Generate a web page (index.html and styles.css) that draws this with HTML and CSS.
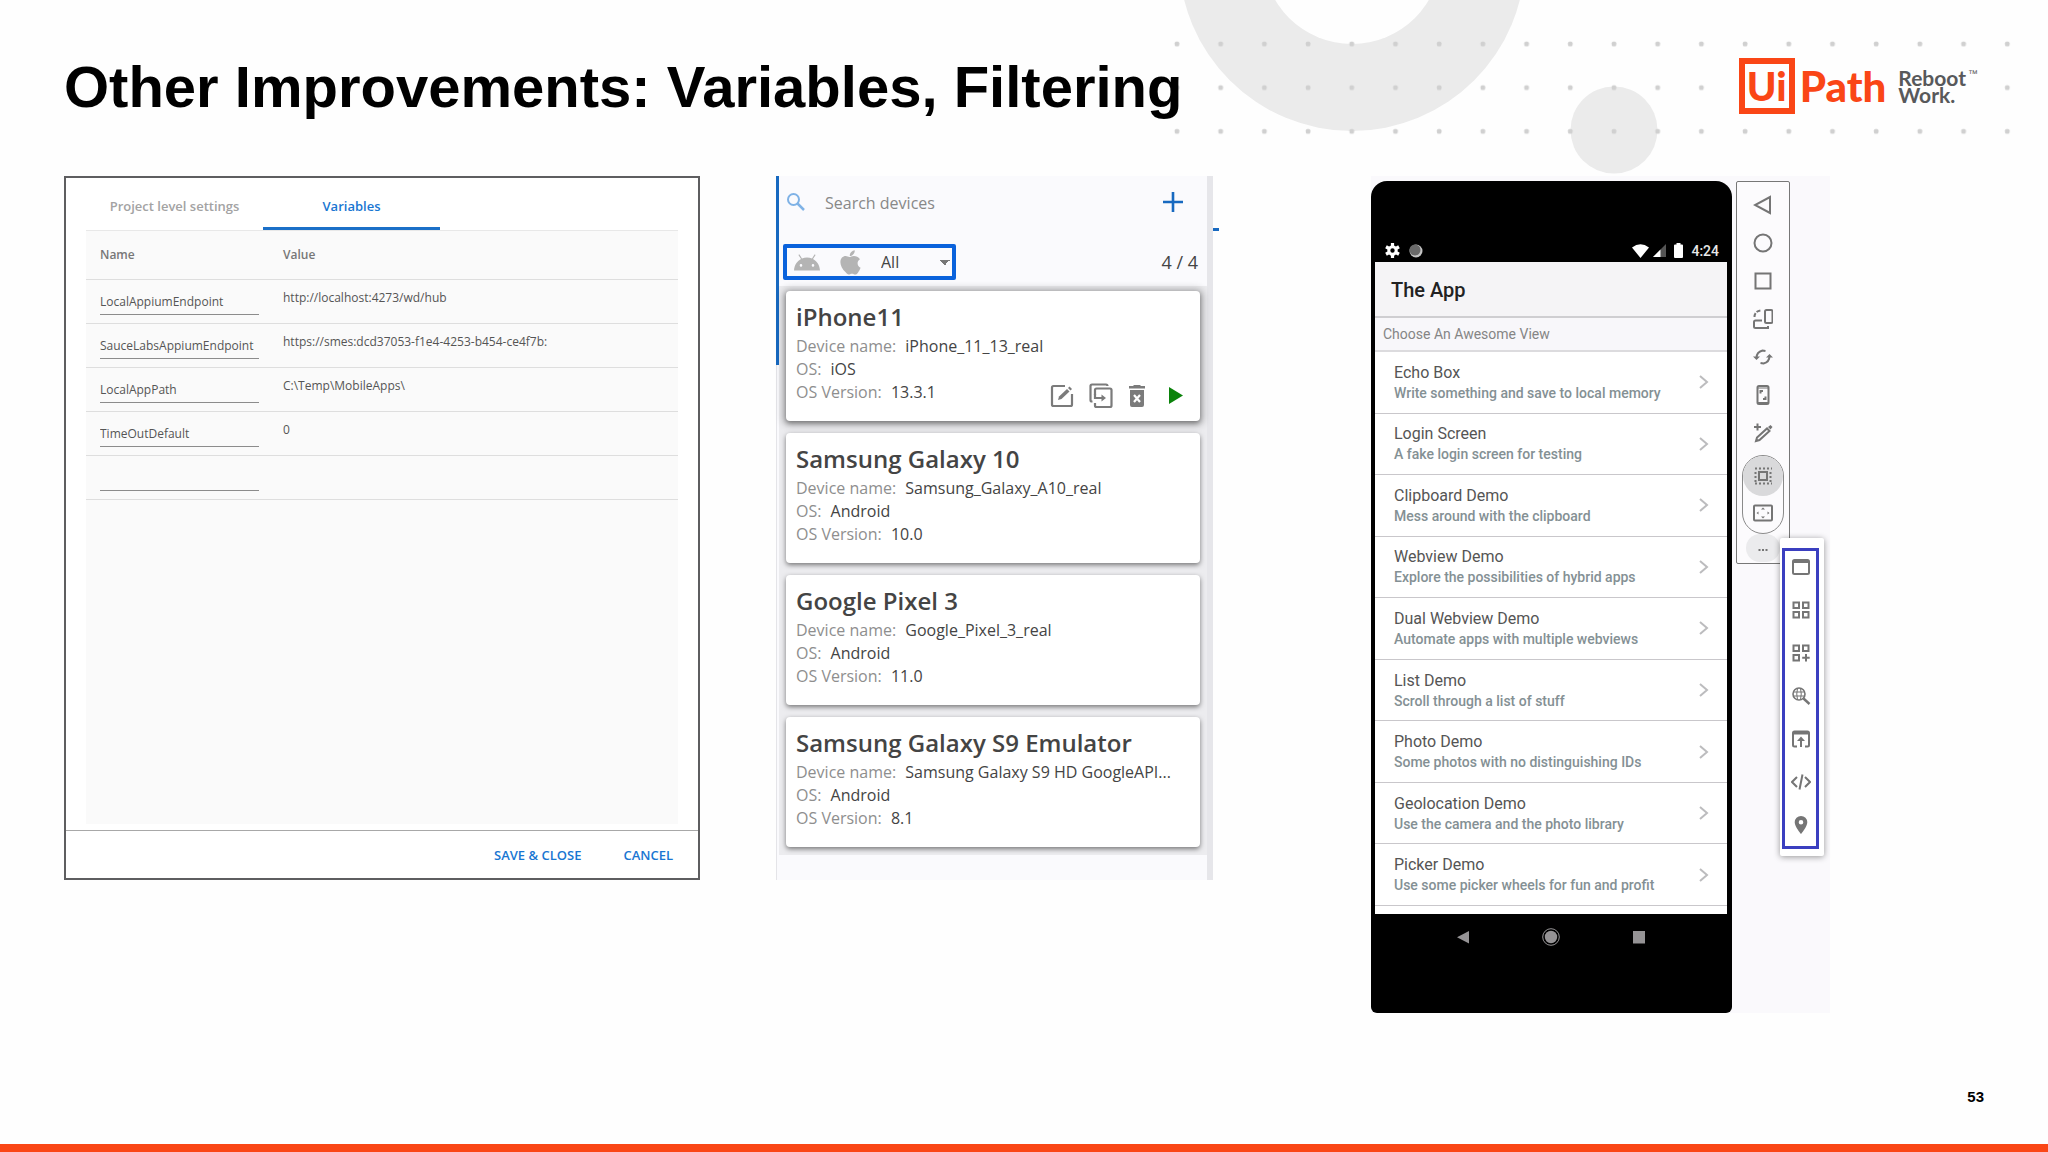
FILE: index.html
```
<!DOCTYPE html>
<html lang="en">
<head>
    <meta charset="UTF-8">
    <meta name="viewport" content="width=device-width, initial-scale=1.0">
    <title>Other Improvements: Variables, Filtering</title>
    <link rel="stylesheet" href="styles.css">
</head>
<body>
    <!-- Background ring and dots -->
    <svg class="backdrop" width="900" height="180" viewBox="1148 0 900 180" aria-hidden="true">
        <defs>
            <pattern id="dots" x="1155" y="22" width="43.7" height="43.7" patternUnits="userSpaceOnUse">
                <rect x="19.700" y="19.700" width="4.600" height="4.600" rx="1.500" fill="#d0d0d0"/>
            </pattern>
        </defs>
        <circle cx="1352" cy="-42" r="173" fill="#ebebeb"/>
        <circle cx="1352" cy="-45" r="89" fill="#fefefe"/>
        <circle cx="1614" cy="130" r="43.5" fill="#ebebeb"/>
        <rect x="1160" y="30" width="860" height="110" fill="url(#dots)"/>
        <rect x="1725" y="56" width="266" height="62" fill="#fefefe"/>
    </svg>

    <header class="slide-header">
        <h1>Other Improvements: Variables, Filtering</h1>
        <div class="logo">
            <span class="logo-ui">Ui</span>
            <span class="logo-path">Path</span>
            <div class="logo-tag">
                <div class="tag-line">Reboot<span class="tm">™</span></div>
                <div class="tag-line">Work.</div>
            </div>
        </div>
    </header>

    <main class="slide-body">
        <!-- Settings dialog -->
        <section class="dialog">
            <div class="tabs" role="tablist">
                <button class="tab" role="tab">Project level settings</button>
                <button class="tab active" role="tab" aria-selected="true">Variables</button>
            </div>
            <div class="dialog-content">
                <table class="variables">
                    <thead>
                        <tr><th class="col-name">Name</th><th>Value</th></tr>
                    </thead>
                    <tbody>
                        <tr>
                            <td><input class="var-name" aria-label="Name 1" value="LocalAppiumEndpoint"></td>
                            <td><input class="var-value" aria-label="Value 1" value="http://localhost:4273/wd/hub"></td>
                        </tr>
                        <tr>
                            <td><input class="var-name" aria-label="Name 2" value="SauceLabsAppiumEndpoint"></td>
                            <td><input class="var-value" aria-label="Value 2" value="https://smes:dcd37053-f1e4-4253-b454-ce4f7b:"></td>
                        </tr>
                        <tr>
                            <td><input class="var-name" aria-label="Name 3" value="LocalAppPath"></td>
                            <td><input class="var-value" aria-label="Value 3" value="C:\Temp\MobileApps\"></td>
                        </tr>
                        <tr>
                            <td><input class="var-name" aria-label="Name 4" value="TimeOutDefault"></td>
                            <td><input class="var-value" aria-label="Value 4" value="0"></td>
                        </tr>
                        <tr>
                            <td><input class="var-name" aria-label="Name 5"></td>
                            <td><input class="var-value" aria-label="Value 5"></td>
                        </tr>
                    </tbody>
                </table>
            </div>
            <footer class="dialog-footer">
                <button>SAVE &amp; CLOSE</button>
                <button>CANCEL</button>
            </footer>
        </section>

        <!-- Device list -->
        <section class="devices">
            <div class="search-row">
                <svg width="20" height="20" viewBox="0 0 20 20" fill="none" stroke="#7fb2e6" stroke-width="2"><circle cx="7.500" cy="7.500" r="5.500"/><path d="M11.500 11.500L18 18" stroke-width="2.500"/></svg>
                <input class="search" type="text" aria-label="Search devices" placeholder="Search devices">
                <button class="icon-button" aria-label="Add device">
                    <svg width="22" height="22" viewBox="0 0 22 22" stroke="#1769c0" stroke-width="2.600"><path d="M11 1v20M1 11h20"/></svg>
                </button>
            </div>
            <div class="filter-row">
                <div class="filter">
                    <svg width="26" height="17" viewBox="0 0 26 17" fill="#b4b4b4"><path d="M0 16.500C.3 11 3 7 7 4.900L4.400.9l.9-.6 2.700 4.200c3.100-1.300 6.900-1.300 10 0L20.700.3l.9.6L19 4.900c4 2.100 6.700 6.100 7 11.600zM7 12.700a1.300 1.300 0 1 0 0-2.600 1.300 1.300 0 0 0 0 2.600zm12 0a1.300 1.300 0 1 0 0-2.600 1.300 1.300 0 0 0 0 2.600z"/></svg>
                    <svg width="21" height="25" viewBox="0 0 21 25" fill="#b4b4b4"><path d="M14.700.2c.2 1.600-.4 3-1.300 4.100-.9 1.100-2.200 1.900-3.600 1.800-.2-1.500.5-3 1.400-4 .9-1 2.400-1.800 3.500-1.900zM20 9.200c-1.500.9-2.400 2.300-2.400 4.100 0 2 1.200 3.700 3 4.400-.6 1.800-1.500 3.500-2.700 5-.7.900-1.400 1.800-2.600 1.800s-1.700-.8-3.300-.8-2.200.8-3.300.8c-1.200 0-2-.9-2.800-1.900C2.100 19.500.4 15 .4 12.300c0-4 2.600-6.200 5.200-6.200 1.500 0 2.900 1 3.800 1 .9 0 2.500-1.100 4.500-1.100 2.100 0 4.600 1 6.100 3.200z"/></svg>
                    <select class="filter-select" aria-label="Platform">
                        <option>All</option>
                    </select>
                </div>
                <span class="count">4 / 4</span>
            </div>
            <div class="device-list">
                <article class="device-card selected">
                    <h2>iPhone11</h2>
                    <p>Device name: <b>iPhone_11_13_real</b></p>
                    <p>OS: <b>iOS</b></p>
                    <p>OS Version: <b>13.3.1</b></p>
                    <div class="card-actions">
                        <button class="icon-button" aria-label="Edit">
                            <svg width="24" height="24" viewBox="0 0 24 24" fill="none" stroke="#7b7b7b" stroke-width="2.200"><path d="M15 2H3.500Q2 2 2 3.500v17Q2 22 3.500 22h17q1.500 0 1.500-1.500V10"/><path d="M8 16l1-3.500L17 5l2.500 2.500L11.500 15z" fill="#7b7b7b" stroke="none"/><path d="M18 4l1.500-1.500L22 5l-1.500 1.500z" fill="#7b7b7b" stroke="none"/></svg>
                        </button>
                        <button class="icon-button" aria-label="Duplicate">
                            <svg width="24" height="26" viewBox="0 0 24 26" fill="none" stroke="#7b7b7b" stroke-width="2.200"><path d="M3.500 18.500H3q-1.500 0-1.500-1.500V3Q1.500 1.500 3 1.500h14q1.500 0 1.500 1.500"/><path d="M6 12V7q0-1.500 1.500-1.500H21q1.500 0 1.500 1.500v15.500q0 1.500-1.500 1.500H7.500Q6 24 6 22.500V20"/><path d="M6 11v4h8"/><path d="M12.500 11.500L17 15l-4.500 3.500z" fill="#7b7b7b" stroke="none"/></svg>
                        </button>
                        <button class="icon-button" aria-label="Delete">
                            <svg width="18" height="24" viewBox="0 0 18 24"><path d="M6 1h6l1 1h4v2.500H1V2h4zM2 6h14v15q0 2-2 2H4q-2 0-2-2z" fill="#7b7b7b"/><path d="M6 11l6 7M12 11l-6 7" stroke="#fff" stroke-width="2.200"/></svg>
                        </button>
                        <button class="icon-button" aria-label="Run">
                            <svg width="14" height="18" viewBox="0 0 14 18"><path d="M0 0v17l14-8.500z" fill="#0b830b"/></svg>
                        </button>
                    </div>
                </article>
                <article class="device-card">
                    <h2>Samsung Galaxy 10</h2>
                    <p>Device name: <b>Samsung_Galaxy_A10_real</b></p>
                    <p>OS: <b>Android</b></p>
                    <p>OS Version: <b>10.0</b></p>
                </article>
                <article class="device-card">
                    <h2>Google Pixel 3</h2>
                    <p>Device name: <b>Google_Pixel_3_real</b></p>
                    <p>OS: <b>Android</b></p>
                    <p>OS Version: <b>11.0</b></p>
                </article>
                <article class="device-card">
                    <h2>Samsung Galaxy S9 Emulator</h2>
                    <p>Device name: <b>Samsung Galaxy S9 HD GoogleAPI...</b></p>
                    <p>OS: <b>Android</b></p>
                    <p>OS Version: <b>8.1</b></p>
                </article>
            </div>
        </section>

        <!-- Emulator -->
        <section class="emulator">
            <div class="phone">
                <div class="status-bar">
                    <svg width="15" height="15" viewBox="0 0 15 15"><circle cx="7.500" cy="7.500" r="3.700" fill="none" stroke="#fff" stroke-width="3"/><path d="M7.500 0v3M7.500 12v3M1 3.750l2.600 1.500M11.400 9.750l2.600 1.500M1 11.250l2.600-1.500M11.400 5.250l2.600-1.500" stroke="#fff" stroke-width="3.200"/></svg>
                    <svg width="14" height="14" viewBox="0 0 14 14"><circle cx="7" cy="7" r="6.500" fill="#c4c4c4"/><circle cx="6" cy="6" r="5.500" fill="#6a6a6a"/></svg>
                    <span class="spacer"></span>
                    <svg width="17" height="14" viewBox="0 0 17 14"><path d="M0 3.500Q8.500-3 17 3.500L8.500 14z" fill="#fff"/></svg>
                    <svg width="13" height="13" viewBox="0 0 13 13"><path d="M13 0v13H0z" fill="#555"/><path d="M7.500 5.500V13H0z" fill="#fff"/></svg>
                    <svg class="battery" width="9" height="15" viewBox="0 0 9 15"><path d="M2.500 0h4v1.500H8q1 0 1 1V14q0 1-1 1H1q-1 0-1-1V2.500q0-1 1-1h1.500z" fill="#fff"/></svg>
                    <span>4:24</span>
                </div>
                <div class="screen">
                    <div class="app-bar">The App</div>
                    <div class="list-header">Choose An Awesome View</div>
                    <ul class="views">
                        <li><a href="#"><span class="view-text">Echo Box<small>Write something and save to local memory</small></span><svg class="chevron" viewBox="0 0 10 14"><path d="M1 1l7 6-7 6"/></svg></a></li>
                        <li><a href="#"><span class="view-text">Login Screen<small>A fake login screen for testing</small></span><svg class="chevron" viewBox="0 0 10 14"><path d="M1 1l7 6-7 6"/></svg></a></li>
                        <li><a href="#"><span class="view-text">Clipboard Demo<small>Mess around with the clipboard</small></span><svg class="chevron" viewBox="0 0 10 14"><path d="M1 1l7 6-7 6"/></svg></a></li>
                        <li><a href="#"><span class="view-text">Webview Demo<small>Explore the possibilities of hybrid apps</small></span><svg class="chevron" viewBox="0 0 10 14"><path d="M1 1l7 6-7 6"/></svg></a></li>
                        <li><a href="#"><span class="view-text">Dual Webview Demo<small>Automate apps with multiple webviews</small></span><svg class="chevron" viewBox="0 0 10 14"><path d="M1 1l7 6-7 6"/></svg></a></li>
                        <li><a href="#"><span class="view-text">List Demo<small>Scroll through a list of stuff</small></span><svg class="chevron" viewBox="0 0 10 14"><path d="M1 1l7 6-7 6"/></svg></a></li>
                        <li><a href="#"><span class="view-text">Photo Demo<small>Some photos with no distinguishing IDs</small></span><svg class="chevron" viewBox="0 0 10 14"><path d="M1 1l7 6-7 6"/></svg></a></li>
                        <li><a href="#"><span class="view-text">Geolocation Demo<small>Use the camera and the photo library</small></span><svg class="chevron" viewBox="0 0 10 14"><path d="M1 1l7 6-7 6"/></svg></a></li>
                        <li><a href="#"><span class="view-text">Picker Demo<small>Use some picker wheels for fun and profit</small></span><svg class="chevron" viewBox="0 0 10 14"><path d="M1 1l7 6-7 6"/></svg></a></li>
                    </ul>
                </div>
                <div class="phone-nav">
                    <button class="icon-button" aria-label="Back"><svg width="18" height="18" viewBox="0 0 18 18"><path d="M15 3v12.500L3 9.250z" fill="#959395"/></svg></button>
                    <button class="icon-button" aria-label="Home"><svg width="18" height="18" viewBox="0 0 18 18"><circle cx="9" cy="9" r="8.300" fill="none" stroke="#959395"/><circle cx="9" cy="9" r="6.200" fill="#959395"/></svg></button>
                    <button class="icon-button" aria-label="Overview"><svg width="18" height="18" viewBox="0 0 18 18"><path d="M3 3h12v12.500H3z" fill="#959395"/></svg></button>
                </div>
            </div>

            <div class="toolbar">
                <button class="tool" aria-label="Back"><svg viewBox="0 0 20 20"><path d="M17 2v16L2 10z"/></svg></button>
                <button class="tool" aria-label="Home"><svg viewBox="0 0 20 20"><circle cx="10" cy="10" r="8.500"/></svg></button>
                <button class="tool" aria-label="Overview"><svg viewBox="0 0 20 20"><path d="M2.500 2.500h15v15h-15z"/></svg></button>
                <button class="tool" aria-label="Rotate"><svg viewBox="0 0 20 20"><rect x="12" y="1" width="7.500" height="13" rx="1.500"/><path d="M9 11.500H2.500Q1 11.500 1 13v4.500Q1 19 2.500 19h12.500v-2"/><path d="M1.500 8q0-5.500 6-6.500" stroke-dasharray="4 1.500"/></svg></button>
                <button class="tool" aria-label="Refresh"><svg viewBox="0 0 20 20"><path d="M3.500 11q0-6 6-7.500l3 .5M16.500 9q0 6-6 7.500l-3-.5"/><path d="M0 9.500h7L3.500 13zM13 10.500h7L16.500 7z" class="solid"/></svg></button>
                <button class="tool" aria-label="Fit screen"><svg viewBox="0 0 20 20"><rect x="4.500" y="1" width="11" height="18" rx="1.500"/><path d="M5 3h10M5 17.500h10" stroke-width="1"/><path d="M7.500 8.500V6H10M12.500 11.500V14H10"/></svg></button>
                <button class="tool" aria-label="Edit"><svg viewBox="0 0 20 20"><path d="M4.500.5v7M1 4h7"/><path d="M3 18l1-3.500L14 5.500l2.500 2.500L6.500 17z"/><path d="M15 4l2.500-2 2 2-2 2.500z" class="solid"/></svg></button>
                <div class="tool-group">
                    <button class="tool round on" aria-label="Select"><svg viewBox="0 0 20 20"><rect x="6" y="6" width="8" height="8"/><path d="M2 2.500h17M2 17.500h17M2.500 6v11M17.500 6v11" stroke-dasharray="2 2"/></svg></button>
                    <button class="tool" aria-label="Resize"><svg viewBox="0 0 20 20"><rect x="1" y="2.500" width="18" height="15" rx="1"/><path d="M10 4.500l2 2H8zM10 15.500l2-2H8zM3.500 10l2-1.500v3zM16.500 10l-2-1.500v3z" class="solid"/></svg></button>
                </div>
                <button class="tool round more" aria-label="More"><svg viewBox="0 0 20 20"><path d="M5.500 9h2v2h-2zM9 9h2v2H9zM12.500 9h2v2h-2z" class="solid"/></svg></button>
            </div>

            <div class="side-menu">
                <div class="side-tools">
                    <button class="tool" aria-label="Window"><svg viewBox="0 0 20 20"><rect x="2" y="3" width="16" height="14" rx="1.500"/><path d="M2 4.500h16" stroke-width="3"/></svg></button>
                    <button class="tool" aria-label="Apps"><svg viewBox="0 0 20 20"><path d="M2.500 2.500H8V8H2.500zM12 2.500h5.500V8H12zM2.500 12H8v5.500H2.500zM12 12h5.500v5.500H12z"/></svg></button>
                    <button class="tool" aria-label="Add app"><svg viewBox="0 0 20 20"><path d="M2.500 2.500H8V8H2.500zM12 2.500h5.500V8H12zM2.500 12H8v5.500H2.500zM15 11v7.500M11.200 14.700h7.500"/></svg></button>
                    <button class="tool" aria-label="Inspect web"><svg viewBox="0 0 20 20"><circle cx="8" cy="8" r="6" stroke-width="1.600"/><path d="M2 6h12M2 10h12M6.500 2.500q-1.500 5.500 0 11M9.500 2.500q1.500 5.500 0 11" stroke-width="1"/><path d="M12.500 12.500l6 5.500" stroke-width="2.400"/></svg></button>
                    <button class="tool" aria-label="Open in browser"><svg viewBox="0 0 20 20"><path d="M6 17.500H3.500Q2 17.500 2 16V4q0-1.500 1.500-1.500h13Q18 2.500 18 4v12q0 1.500-1.500 1.500H14"/><path d="M2 4h16" stroke-width="3"/><path d="M10 18V11"/><path d="M6 12l4-4.500 4 4.500z" class="solid"/></svg></button>
                    <button class="tool" aria-label="Source"><svg viewBox="0 0 20 20"><path d="M6 5l-5 5 5 5M14 5l5 5-5 5M11.500 2.500l-3 15"/></svg></button>
                    <button class="tool" aria-label="Location"><svg viewBox="0 0 20 20"><path d="M10 1a6.300 6.300 0 0 0-6.300 6.300C3.700 12 10 19 10 19s6.300-7 6.300-11.700A6.300 6.300 0 0 0 10 1zm0 4a2.300 2.300 0 1 1 0 4.600A2.300 2.300 0 0 1 10 5z" class="solid"/></svg></button>
                </div>
            </div>
        </section>
    </main>

    <footer class="slide-footer">53</footer>
</body>
</html>
```
FILE: styles.css
```
* {
    box-sizing: border-box;
}

body {
    display: flex;
    flex-direction: column;
    min-height: 100vh;
    margin: 0;
    background-color: #fefefe;
    color: #000;
    font-family: "Open Sans", "Noto Sans", sans-serif;
    border-bottom: 8px solid #fa4616;
    position: relative;
}

button, input, select {
    font: inherit;
    color: inherit;
    border: none;
    background: none;
    padding: 0;
    margin: 0;
    outline: none;
}

svg {
    display: block;
    flex: none;
}

.backdrop {
    position: absolute;
    top: 0;
    right: 0;
}

/* Header */
.slide-header {
    position: relative;
    display: flex;
    justify-content: space-between;
    align-items: center;
    height: 176px;
    padding: 0 70px 4px 64px;
}

h1 {
    margin: 0;
    font-family: "Liberation Sans", Arial, sans-serif;
    font-size: 58px;
    line-height: 68px;
    padding-top: 2px;
}

.logo {
    display: flex;
    align-items: center;
    height: 56px;
    margin-bottom: 1px;
    color: #fa4616;
    font-family: Lato, sans-serif;
    font-weight: bold;
}

.logo-ui {
    display: flex;
    align-items: center;
    justify-content: center;
    width: 56px;
    height: 56px;
    border: 6px solid #fa4616;
    font-size: 40px;
    font-weight: 900;
    line-height: 40px;
}

.logo-path {
    margin-left: 5px;
    font-size: 42px;
    font-weight: 900;
    line-height: 42px;
}

.logo-tag {
    margin-left: 12px;
    color: #58595b;
    font-size: 21px;
}

.tag-line {
    display: flex;
    height: 17px;
    line-height: 17px;
}

.tm {
    margin-left: 2px;
    font-family: "Liberation Sans", Arial, sans-serif;
    font-size: 10px;
    font-weight: normal;
    line-height: 10px;
}

.slide-body {
    flex: 1;
    display: grid;
    grid-template-columns: 636fr 76fr 443fr 152fr 459fr 154fr;
    align-items: start;
    padding: 0 64px;
}

/* Settings dialog */
.dialog {
    display: flex;
    flex-direction: column;
    min-height: 704px;
    border: 2px solid #5e5e60;
    background-color: #fff;
    color: #555;
    font-size: 13px;
}

.tabs {
    display: flex;
    margin: 0 20px;
    border-bottom: 1px solid #e8e8e8;
}

.tab {
    width: 177px;
    height: 52px;
    padding-top: 6px;
    color: #a3a3a3;
    font-weight: 600;
    border-bottom: 3px solid transparent;
}

.tab.active {
    color: #1976d2;
    border-bottom-color: #1b70c8;
}

.dialog-content {
    flex: 1;
    margin: 0 20px 6px;
    background-color: #fafafa;
}

.variables {
    width: 100%;
    border-collapse: collapse;
}

.variables th {
    height: 48px;
    padding: 0 0 0 14px;
    font-size: 12px;
    font-weight: 600;
    color: #777;
    text-align: left;
}

.variables td {
    height: 44px;
    padding: 0 0 0 14px;
    vertical-align: top;
}

.variables tr {
    border-bottom: 1px solid #dedede;
}

.variables .col-name {
    width: 183px;
}

.var-name {
    display: block;
    width: 159px;
    height: 26px;
    margin-top: 9px;
    border-bottom: 1px solid #8c8c8c;
    font-size: 12px;
}

.var-value {
    display: block;
    width: 270px;
    height: 24px;
    margin-top: 6px;
    font-size: 12px;
}

.dialog-footer {
    display: flex;
    justify-content: flex-end;
    gap: 42px;
    height: 48px;
    padding-right: 25px;
    border-top: 1px solid #a8a8a8;
    color: #1976d2;
    font-weight: 600;
}

/* Device list */
.devices {
    grid-column: 3;
    position: relative;
    min-height: 704px;
    margin-right: 6px;
    padding-left: 2px;
    background-color: #fafafd;
    border-left: 1px solid #e4e4e8;
    border-right: 6px solid #e6e6ea;
    color: #444;
    font-size: 16px;
}

/* selection marks on both edges */
.devices::before {
    content: "";
    position: absolute;
    left: -1px;
    top: 0;
    width: 3px;
    height: 189px;
    background-color: #1769c0;
}

.devices::after {
    content: "";
    position: absolute;
    right: -12px;
    top: 52px;
    width: 6px;
    height: 3px;
    background-color: #1769c0;
}

.search-row {
    display: flex;
    align-items: center;
    height: 54px;
    padding: 0 23px 2px 7px;
}

.search {
    flex: 1;
    min-width: 0;
    margin: 2px 0 0 19px;
}

.search::placeholder {
    color: #888;
    opacity: 1;
}

.icon-button {
    cursor: pointer;
}

.filter-row {
    display: flex;
    align-items: center;
    justify-content: space-between;
    height: 56px;
    padding: 8px 9px 0 4px;
}

.filter {
    display: flex;
    align-items: center;
    width: 173px;
    height: 36px;
    padding-left: 7px;
    gap: 20px;
    border: 4px solid #0a62dc;
    border-radius: 2px;
}

.filter-select {
    flex: 1;
    appearance: none;
    background: linear-gradient(to bottom left, #777 50%, transparent 50%) right 7px center / 5px 5px no-repeat,
        linear-gradient(to bottom right, #777 50%, transparent 50%) right 2px center / 5px 5px no-repeat;
}

.count {
    font-size: 18px;
}

.device-list {
    display: flex;
    flex-direction: column;
    gap: 12px;
    padding: 5px 7px 8px;
    background-color: #ececef;
}

.device-card {
    position: relative;
    height: 130px;
    padding: 10px;
    background-color: #fff;
    border-radius: 4px;
    box-shadow: 0 2px 5px rgba(0, 0, 0, 0.5);
}

.device-card.selected {
    box-shadow: 0 1px 7px 4px rgba(0, 0, 0, 0.2), 0 2px 5px rgba(0, 0, 0, 0.4);
}

.device-card h2 {
    margin: 0 0 2px;
    font-size: 24px;
    font-weight: 600;
    line-height: 32px;
}

.device-card p {
    margin: 0;
    overflow: hidden;
    white-space: nowrap;
    color: #8e8e8e;
    line-height: 23px;
}

.device-card b {
    margin-left: 5px;
    color: #444;
    font-weight: normal;
}

.card-actions {
    position: absolute;
    right: 17px;
    bottom: 12px;
    display: flex;
    align-items: center;
    gap: 15px;
}

.card-actions .icon-button:last-child {
    margin-left: 8px;
}

/* Emulator */
.emulator {
    grid-column: 5;
    position: relative;
    display: flex;
    align-items: flex-start;
    gap: 4px;
    padding-top: 5px;
    background-color: #faf9fc;
    font-family: Roboto, sans-serif;
}

.phone {
    width: 361px;
    padding: 56px 5px 0 4px;
    background-color: #000;
    border-radius: 16px 16px 6px 6px;
}

.status-bar {
    display: flex;
    align-items: center;
    gap: 4px;
    height: 25px;
    padding: 2px 8px 0 10px;
    color: #e8e8e8;
    font-size: 14px;
    font-weight: 500;
}

.status-bar svg:nth-child(2) {
    margin-left: 5px;
}

.battery {
    margin: 0 4px;
}

.spacer {
    flex: 1;
}

.screen {
    padding-bottom: 8px;
    background-color: #fff;
}

.app-bar {
    height: 56px;
    padding-left: 16px;
    background-color: #f5f4f6;
    border-bottom: 2px solid #cfced1;
    color: #222;
    font-size: 20px;
    font-weight: 500;
    line-height: 57px;
}

.list-header {
    height: 34px;
    padding-left: 8px;
    background-color: #f8f7fa;
    border-bottom: 2px solid #dcdbde;
    color: #858585;
    font-size: 14px;
    line-height: 33px;
}

.views {
    display: grid;
    grid-template-rows: repeat(9, 1fr);
    height: 554px;
    margin: 0;
    padding: 0;
    list-style: none;
}

.views li {
    border-bottom: 1px solid #c9c7cb;
}

.views a {
    display: flex;
    align-items: center;
    height: 100%;
    padding: 0 18px 0 19px;
    color: #555;
    font-size: 16px;
    line-height: 21px;
    text-decoration: none;
}

.view-text {
    flex: 1;
    padding-top: 1px;
}

.views small {
    display: block;
    color: #849094;
    font-size: 14px;
    font-weight: 500;
}

.chevron {
    width: 10px;
    height: 14px;
    fill: none;
    stroke: #bcbcbe;
    stroke-width: 2;
}

.phone-nav {
    display: flex;
    justify-content: space-between;
    height: 99px;
    padding: 14px 79px 67px;
}

.toolbar {
    display: flex;
    flex-direction: column;
    align-items: center;
    width: 54px;
    height: 383px;
    padding-top: 4px;
    background-color: #fcfbfd;
    border: 1px solid #777;
    border-radius: 2px;
}

.tool {
    display: flex;
    align-items: center;
    justify-content: center;
    width: 40px;
    height: 38px;
    cursor: pointer;
}

.tool svg {
    width: 20px;
    height: 20px;
    fill: none;
    stroke: #757575;
    stroke-width: 2;
}

.tool .solid {
    fill: #757575;
    stroke: none;
}

.tool-group {
    width: 42px;
    height: 79px;
    margin-top: 3px;
    border: 1px solid #8a8a8a;
    border-radius: 21px;
}

.round {
    height: 40px;
    border-radius: 50%;
}

.round.on {
    background-color: #d9d9db;
}

.tool-group .tool:last-child {
    height: 34px;
}

.round.more {
    width: 34px;
    height: 28px;
    padding-top: 4px;
    background-color: #ebebed;
    border-radius: 14px;
}

/* opens over the corner of the toolbar */
.side-menu {
    position: absolute;
    top: 362px;
    right: 6px;
    padding: 10px 5px 7px 2px;
    background-color: #fff;
    border-radius: 2px;
    box-shadow: 0 1px 6px rgba(0, 0, 0, 0.4);
}

.side-tools {
    display: flex;
    flex-direction: column;
    align-items: center;
    gap: 11px;
    width: 37px;
    padding-bottom: 5px;
    border: 3px solid #3b3fc0;
}

.side-menu .tool {
    height: 32px;
}

/* Page number */
.slide-footer {
    padding: 0 64px 38px;
    font-family: "Liberation Sans", Arial, sans-serif;
    font-size: 15px;
    font-weight: bold;
    line-height: 18px;
    text-align: right;
}
```
